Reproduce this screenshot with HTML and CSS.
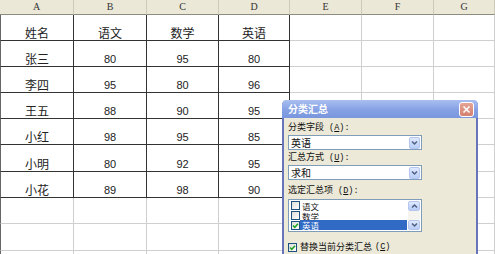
FILE: index.html
```html
<!DOCTYPE html>
<html lang="zh">
<head>
<meta charset="utf-8">
<title>分类汇总</title>
<link rel="stylesheet" href="styles.css">
</head>
<body>
<div class="sheet">
  <div class="hd">A</div><div class="hd">B</div><div class="hd">C</div><div class="hd">D</div><div class="hd">E</div><div class="hd">F</div><div class="hd">G</div>

  <div class="c t a z">姓名</div><div class="c t z">语文</div><div class="c t z">数学</div><div class="c t z">英语</div><div class="c"></div><div class="c"></div><div class="c"></div>
  <div class="c t a z">张三</div><div class="c t n">80</div><div class="c t n">95</div><div class="c t n">80</div><div class="c"></div><div class="c"></div><div class="c"></div>
  <div class="c t a z">李四</div><div class="c t n">95</div><div class="c t n">80</div><div class="c t n">96</div><div class="c"></div><div class="c"></div><div class="c"></div>
  <div class="c t a z">王五</div><div class="c t n">88</div><div class="c t n">90</div><div class="c t n">95</div><div class="c"></div><div class="c"></div><div class="c"></div>
  <div class="c t a z">小红</div><div class="c t n">98</div><div class="c t n">95</div><div class="c t n">85</div><div class="c"></div><div class="c"></div><div class="c"></div>
  <div class="c t a z">小明</div><div class="c t n">80</div><div class="c t n">92</div><div class="c t n">95</div><div class="c"></div><div class="c"></div><div class="c"></div>
  <div class="c t a z">小花</div><div class="c t n">89</div><div class="c t n">98</div><div class="c t n">90</div><div class="c"></div><div class="c"></div><div class="c"></div>
  <div class="c a"></div><div class="c"></div><div class="c"></div><div class="c"></div><div class="c"></div><div class="c"></div><div class="c"></div>
  <div class="c a"></div><div class="c"></div><div class="c"></div><div class="c"></div><div class="c"></div><div class="c"></div><div class="c"></div>
  <div class="c a"></div><div class="c"></div><div class="c"></div><div class="c"></div><div class="c"></div><div class="c"></div><div class="c"></div>
</div>

<div class="dlg">
  <div class="titlebar">
    <span class="ttl">分类汇总</span>
    <span class="close"><svg width="9" height="9" viewBox="0 0 9 9"><path d="M1.5 1.5 L7.5 7.5 M7.5 1.5 L1.5 7.5" stroke="#fff" stroke-width="1.6" fill="none"/></svg></span>
  </div>
  <div class="body">
    <div class="lbl">分类字段<span class="m"> (<u>A</u>):</span></div>
    <div class="combo"><span class="val">英语</span><span class="dd"><svg width="7" height="6" viewBox="0 0 7 6"><path d="M1 1.5 L3.5 4 L6 1.5" stroke="#4d6185" stroke-width="1.5" fill="none"/></svg></span></div>
    <div class="lbl l2">汇总方式<span class="m"> (<u>U</u>):</span></div>
    <div class="combo"><span class="val">求和</span><span class="dd"><svg width="7" height="6" viewBox="0 0 7 6"><path d="M1 1.5 L3.5 4 L6 1.5" stroke="#4d6185" stroke-width="1.5" fill="none"/></svg></span></div>
    <div class="lbl l3">选定汇总项<span class="m"> (<u>D</u>):</span></div>
    <div class="list">
      <div class="items">
        <div class="it"><span class="cb"></span><span class="tx">语文</span></div>
        <div class="it"><span class="cb"></span><span class="tx">数学</span></div>
        <div class="it"><span class="cb"><svg width="7" height="7" viewBox="0 0 7 7"><path d="M1 3.5 L2.8 5.3 L6 1.8" stroke="#21a121" stroke-width="1.5" fill="none"/></svg></span><span class="tx sel">英语</span></div>
      </div>
      <div class="sb">
        <span class="sbb"><svg width="7" height="6" viewBox="0 0 7 6"><path d="M1 4.5 L3.5 2 L6 4.5" stroke="#4d6185" stroke-width="1.5" fill="none"/></svg></span>
        <span class="trk"></span>
        <span class="sbb"><svg width="7" height="6" viewBox="0 0 7 6"><path d="M1 1.5 L3.5 4 L6 1.5" stroke="#4d6185" stroke-width="1.5" fill="none"/></svg></span>
      </div>
    </div>
    <div class="chk"><span class="cb"><svg width="7" height="7" viewBox="0 0 7 7"><path d="M1 3.5 L2.8 5.3 L6 1.8" stroke="#21a121" stroke-width="1.5" fill="none"/></svg></span>替换当前分类汇总<span class="m"> (<u>C</u>)</span></div>
    <div class="chk c2"><span class="cb"></span></div>
  </div>
</div>
</body>
</html>
```

FILE: styles.css
```css
* { box-sizing: border-box; margin: 0; padding: 0; }
html, body { width: 495px; height: 254px; overflow: hidden; background: #fff; }
body { position: relative; font-family: "Noto Sans CJK SC", sans-serif; color: #111; }

.sheet {
  display: grid;
  grid-template-columns: 74px 73px 72px 71px 72px 72px 1fr;
  grid-template-rows: 15px repeat(5, 26px) 27px 26px 26px 27px 26px;
}
.hd {
  background: #ebe8d8;
  border-right: 1px solid #cdcab9;
  border-bottom: 1px solid #8e8c80;
  font: 10px/14px "Liberation Serif", serif;
  text-align: center;
  color: #333;
}
.c {
  border-right: 1px solid #cfcfcf;
  border-bottom: 1px solid #cfcfcf;
  display: flex;
  align-items: flex-end;
  justify-content: center;
  padding-bottom: 1px;
}
.a { border-left: 1px solid #666; }
.t { border-right-color: #333; border-bottom-color: #333; }
.z { font-size: 12px; line-height: 12px; color: #222; }
.n { font: 11px/11px "Liberation Sans", sans-serif; padding-bottom: 1px; color: #222; }

.dlg {
  position: absolute;
  left: 282px;
  top: 100px;
  width: 196px;
  height: 170px;
  background: #ece9d8;
  border: 2px solid #6674bd;
  border-top: none;
  border-radius: 5px 5px 0 0;
}
.titlebar {
  height: 18px;
  margin: 0 -2px;
  background: linear-gradient(#a9bff0, #86a1e4 55%, #7895de);
  border-radius: 5px 5px 0 0;
  display: flex;
  align-items: center;
  justify-content: space-between;
  padding: 0 4px 0 6px;
}
.ttl { color: #fff; font-size: 10px; line-height: 12px; font-weight: bold; }
.close {
  width: 15px;
  height: 15px;
  background: linear-gradient(#e6a496, #d4806f);
  border: 1px solid #fff;
  border-radius: 3px;
  display: flex;
  align-items: center;
  justify-content: center;
}
.body { padding: 3px 0 0 4px; }
.lbl { font-size: 9px; line-height: 12px; color: #111; }
.m { font-family: "Liberation Mono", monospace; font-size: 8.5px; }
.l2 { margin-top: 1px; }
.l3 { margin-top: 4px; }
.combo {
  width: 134px;
  height: 15px;
  margin-top: 1px;
  background: #fff;
  border: 1px solid #7f9db9;
  display: flex;
  align-items: center;
  justify-content: space-between;
  padding: 0 1px 0 2px;
}
.val { font-size: 10px; line-height: 12px; }
.dd, .sbb {
  width: 11px;
  height: 12px;
  background: linear-gradient(#e0e9fe, #b9cdf7);
  border: 1px solid #b3c6ef;
  border-radius: 2px;
  display: flex;
  align-items: center;
  justify-content: center;
}
.list {
  width: 134px;
  height: 33px;
  margin-top: 2px;
  background: #fff;
  border: 1px solid #7f9db9;
  display: flex;
  padding: 1px 1px 1px 2px;
}
.items { flex: 1; display: flex; flex-direction: column; }
.it { height: 10px; display: flex; align-items: center; overflow: hidden; }
.cb {
  width: 9px;
  height: 9px;
  border: 1px solid #1c5180;
  background: linear-gradient(135deg, #dcdcd7, #fff);
  display: flex;
  align-items: center;
  justify-content: center;
  flex: none;
}
.tx { flex: 1; font-size: 8.5px; line-height: 10px; padding-left: 2px; height: 10px; }
.sel { background: #316ac5; color: #fff; margin-right: 1px; }
.sb { width: 12px; display: flex; flex-direction: column; }
.sbb { width: 12px; height: 10px; }
.trk { flex: 1; background: #f5f4ef; }
.chk {
  margin-top: 9px;
  height: 12px;
  display: flex;
  align-items: center;
  gap: 3px;
  font-size: 9px;
  line-height: 12px;
}
.c2 { margin-top: 1px; }
```
